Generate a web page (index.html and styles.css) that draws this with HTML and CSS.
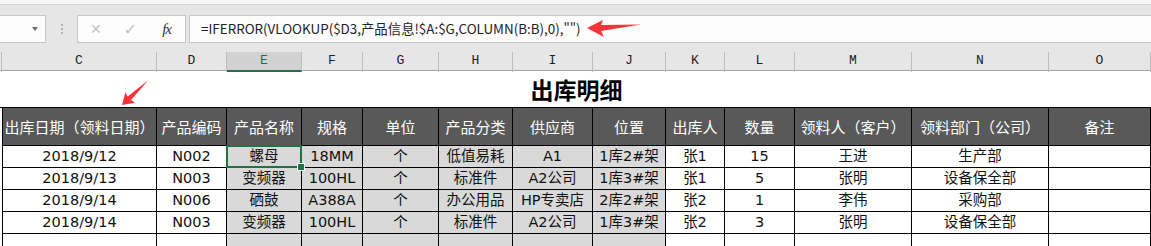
FILE: index.html
```html
<!DOCTYPE html>
<html lang="zh-CN">
<head>
	<meta charset="UTF-8">
	<title>出库明细</title>
	<link rel="stylesheet" href="styles.css">
</head>
<body>
	<div class="app">
		<div class="ribbon_edge"></div>
		<div class="formula_bar">
			<div class="name_box"><span class="caret"></span></div>
			<div class="grip"><i></i><i></i><i></i></div>
			<div class="fx_tools">
				<span class="cancel">✕</span>
				<span class="enter">✓</span>
				<span class="fx">fx</span>
			</div>
			<div class="formula">=IFERROR(VLOOKUP($D3,产品信息!$A:$G,COLUMN(B:B),0),"")</div>
		</div>
		<div class="col_heads">
			<div class="corner"></div>
			<div>C</div><div>D</div><div class="active">E</div><div>F</div><div>G</div>
			<div>H</div><div>I</div><div>J</div><div>K</div><div>L</div>
			<div>M</div><div>N</div><div>O</div>
		</div>
		<div class="sheet">
			<div class="title_row">
				<div class="gutter"></div>
				<div class="title">出库明细</div>
			</div>
			<div class="row head">
				<div class="gutter"></div>
				<div>出库日期（领料日期）</div><div>产品编码</div><div>产品名称</div><div>规格</div>
				<div>单位</div><div>产品分类</div><div>供应商</div><div>位置</div><div>出库人</div>
				<div>数量</div><div>领料人（客户）</div><div>领料部门（公司）</div><div>备注</div>
			</div>
			<div class="row">
				<div class="gutter"></div>
				<div>2018/9/12</div><div>N002</div><div class="g selected">螺母</div><div class="g">18MM</div>
				<div class="g">个</div><div class="g">低值易耗</div><div class="g">A1</div><div class="g">1库2#架</div><div>张1</div>
				<div>15</div><div>王进</div><div>生产部</div><div></div>
			</div>
			<div class="row">
				<div class="gutter"></div>
				<div>2018/9/13</div><div>N003</div><div class="g">变频器</div><div class="g">100HL</div>
				<div class="g">个</div><div class="g">标准件</div><div class="g">A2公司</div><div class="g">1库3#架</div><div>张1</div>
				<div>5</div><div>张明</div><div>设备保全部</div><div></div>
			</div>
			<div class="row">
				<div class="gutter"></div>
				<div>2018/9/14</div><div>N006</div><div class="g">硒鼓</div><div class="g">A388A</div>
				<div class="g">个</div><div class="g">办公用品</div><div class="g">HP专卖店</div><div class="g">2库2#架</div><div>张2</div>
				<div>1</div><div>李伟</div><div>采购部</div><div></div>
			</div>
			<div class="row">
				<div class="gutter"></div>
				<div>2018/9/14</div><div>N003</div><div class="g">变频器</div><div class="g">100HL</div>
				<div class="g">个</div><div class="g">标准件</div><div class="g">A2公司</div><div class="g">1库3#架</div><div>张2</div>
				<div>3</div><div>张明</div><div>设备保全部</div><div></div>
			</div>
			<div class="row">
				<div class="gutter"></div>
				<div></div><div></div><div class="g"></div><div class="g"></div>
				<div class="g"></div><div class="g"></div><div class="g"></div><div class="g"></div><div></div>
				<div></div><div></div><div></div><div></div>
			</div>
		</div>
		<svg class="arrows" width="1151" height="246" viewBox="0 0 1151 246">
			<!-- arrow at the formula -->
			<polygon points="587,28 603,20 601,25 641,24.5 601,31 604,37" fill="#f5333a"/>
			<!-- arrow at the date heading -->
			<g transform="translate(122,105) rotate(-42.6)">
				<polygon points="0,0 11,-7 10,-2.5 36,-0.5 10,2.5 11,7" fill="#f5333a"/>
			</g>
		</svg>
	</div>
</body>
</html>
```

FILE: styles.css
```css
*{
	margin: 0;
	padding: 0;
	box-sizing: border-box;
}
body{
	background-color: #fff;
	overflow: hidden;
	font-family: "Noto Sans CJK SC", "Noto Sans", sans-serif;
}
.app{
	position: relative;
	width: 1151px;
	height: 246px;
}
.ribbon_edge{
	height: 5px;
	background-color: #f4f4f4;
	border-bottom: 1px solid #d4d4d4;
}
.formula_bar{
	display: flex;
	align-items: stretch;
	height: 47px;
	padding: 10px 0 9px 0;
	background-color: #e6e6e6;
}
.name_box{
	position: relative;
	width: 46px;
	background-color: #fdfdfd;
	border: 1px solid #c6c6c6;
	border-left: none;
}
.caret{
	position: absolute;
	left: 32px;
	top: 11px;
	border-left: 3px solid transparent;
	border-right: 3px solid transparent;
	border-top: 4px solid #6d6d6d;
}
.grip{
	display: flex;
	flex-direction: column;
	justify-content: center;
	align-items: center;
	gap: 2px;
	width: 31px;
}
.grip i{
	width: 2px;
	height: 2px;
	background-color: #b0b0b0;
}
.fx_tools{
	display: flex;
	align-items: center;
	width: 109px;
	background-color: #fdfdfd;
	border: 1px solid #c6c6c6;
	color: #c2c2c2;
	font-size: 15px;
}
.cancel{
	margin-left: 12px;
	font-family: "DejaVu Sans", sans-serif;
	font-size: 14px;
}
.enter{
	margin-left: 22px;
	font-family: "DejaVu Sans", sans-serif;
	font-size: 16px;
}
.fx{
	margin-left: 25px;
	color: #333;
	font-family: "Liberation Serif", serif;
	font-style: italic;
	font-size: 15px;
	letter-spacing: -1px;
}
.formula{
	flex: 1;
	margin-left: 3px;
	padding-left: 11px;
	background-color: #fdfdfd;
	border: 1px solid #c6c6c6;
	border-right: none;
	color: #222;
	font-size: 13.4px;
	line-height: 25px;
	white-space: nowrap;
}
.col_heads{
	display: grid;
	grid-template-columns: 2px 155px 70px 75px 61px 76px 74px 80px 73px 59px 70px 117px 137px 102px;
	height: 19px;
	background-color: #e6e6e6;
	border-bottom: 1px solid #a3a3a3;
}
.col_heads div{
	border-right: 1px solid #bdbdbd;
	text-align: center;
	font-family: "Liberation Mono", monospace;
	font-size: 13px;
	line-height: 18px;
	color: #222;
}
.col_heads .corner{
	border-right: 1px solid #bdbdbd;
}
.col_heads .active{
	background-color: #d2d2d2;
	border-bottom: 2px solid #217346;
	color: #217346;
}
.sheet{
	display: flex;
	flex-direction: column;
}
.title_row{
	display: flex;
	height: 36px;
}
.title_row .gutter{
	width: 2px;
}
.title{
	flex: 1;
	text-align: center;
	font-size: 23px;
	font-weight: bold;
	line-height: 36px;
	color: #000;
}
.row{
	display: grid;
	grid-template-columns: 2px 155px 70px 75px 61px 76px 74px 80px 73px 59px 70px 117px 137px 102px;
	height: 22px;
}
.row div{
	border-right: 1px solid #000;
	border-bottom: 1px solid #000;
	text-align: center;
	font-family: "DejaVu Sans", "Noto Sans CJK SC", sans-serif;
	font-size: 14.5px;
	line-height: 21px;
	color: #111;
	white-space: nowrap;
}
.row div:nth-child(2){
	border-left: 1px solid #000;
}
.row .gutter{
	border: none;
	border-bottom: none;
	background-color: #fff;
}
.row.head{
	height: 39px;
	border-top: 1px solid #000;
}
.row.head div{
	background-color: #595959;
	color: #fff;
	font-family: "Noto Sans CJK SC", sans-serif;
	font-size: 15px;
	line-height: 37px;
}
.row.head .gutter{
	background-color: #fff;
}
.row .g{
	background-color: #d9d9d9;
}
.row .selected{
	position: relative;
}
.selected::after{
	content: "";
	position: absolute;
	left: -1px;
	top: -1px;
	right: -1px;
	bottom: -1px;
	border: 2px solid #217346;
}
.selected::before{
	content: "";
	position: absolute;
	right: -4px;
	bottom: -4px;
	width: 6px;
	height: 6px;
	background-color: #217346;
	border: 1px solid #fff;
	z-index: 1;
}
.arrows{
	position: absolute;
	left: 0;
	top: 0;
	pointer-events: none;
}
```
